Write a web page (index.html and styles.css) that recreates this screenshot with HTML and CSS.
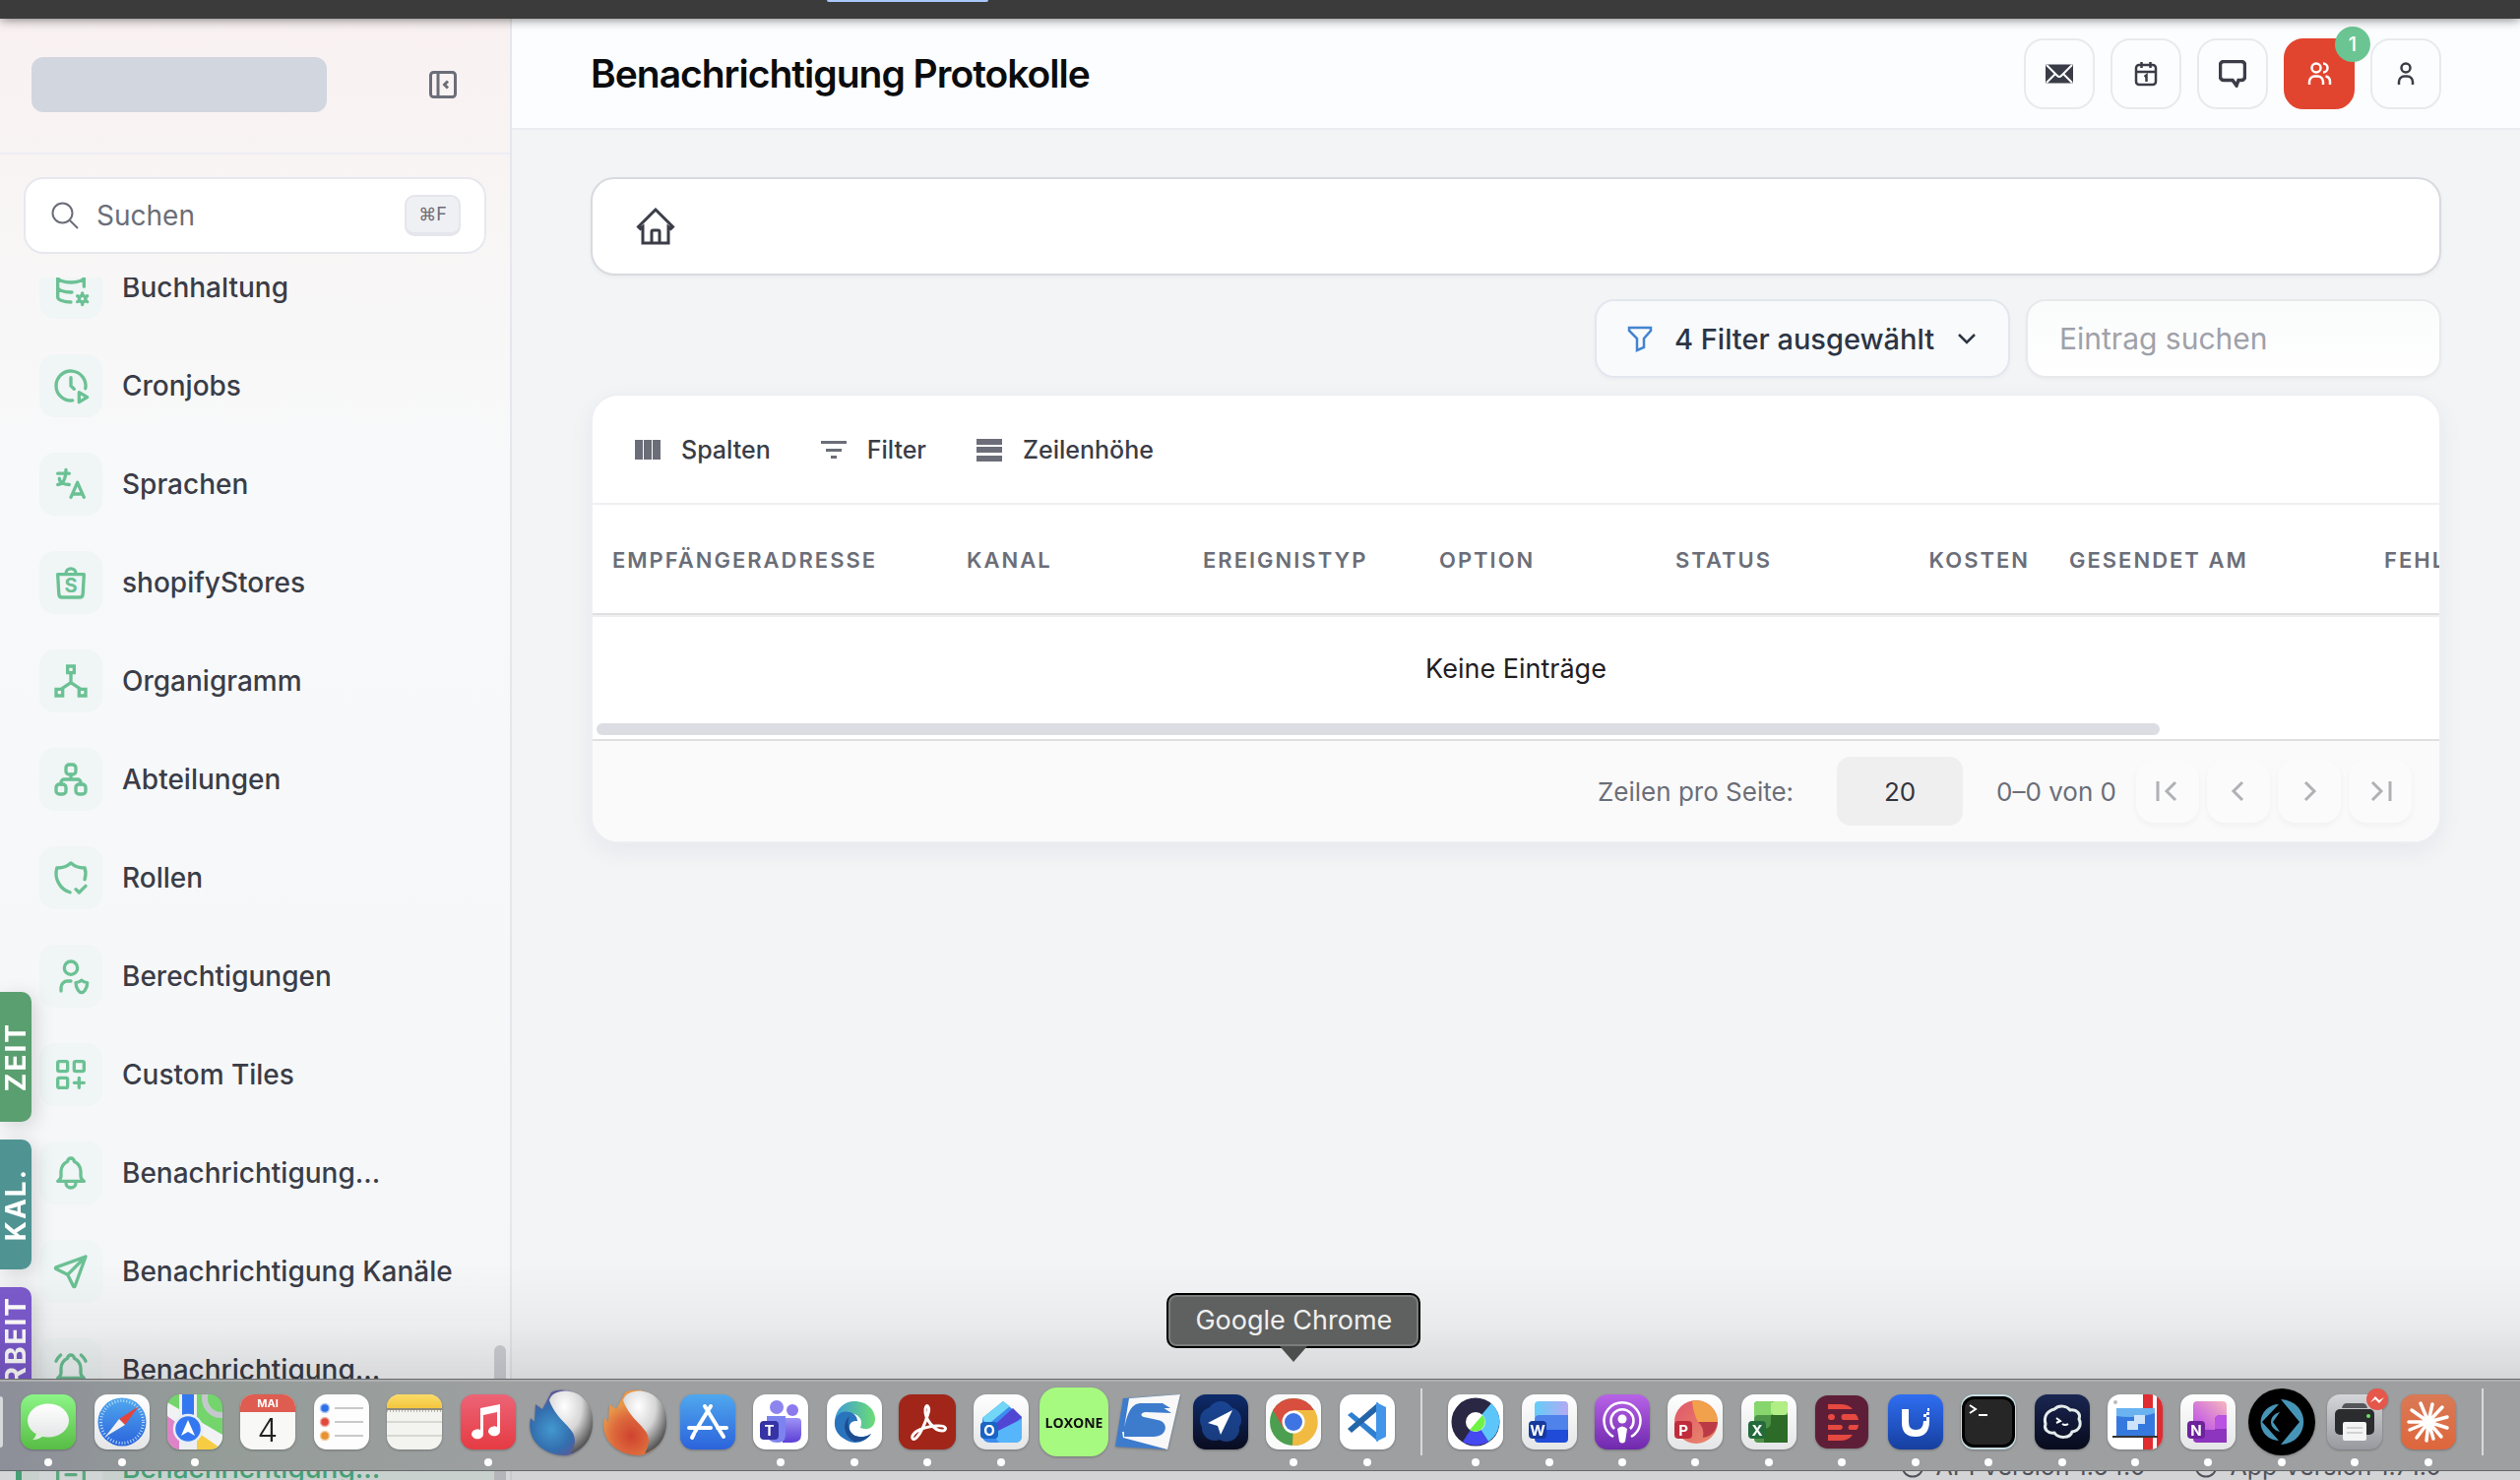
FILE: index.html
```html
<!DOCTYPE html>
<html lang="de">
<head>
    <meta charset="UTF-8">
    <meta name="viewport" content="width=device-width, initial-scale=1.0">
    <title>Benachrichtigung Protokolle</title>
    <link rel="stylesheet" href="styles.css">
</head>
<body>
    <div class="browser-bar"><span class="browser-tab"></span></div>

    <div class="app">
        <aside class="sidebar">
            <div class="sidebar-header">
                <div class="logo"></div>
                <button type="button" class="toggle-btn" aria-label="Menü einklappen">
                    <svg class="icon-md" viewBox="0 0 28 28"><rect x="1.5" y="1.5" width="25" height="25" rx="3"/><path d="M9 2v24"/><path d="M19 10.500l-3.500 3.500 3.500 3.500" /></svg>
                </button>
            </div>

            <label class="sidebar-search">
                <svg class="icon-md" viewBox="0 0 28 28"><circle cx="11.500" cy="11.500" r="10"/><path d="M19 19l8 8"/></svg>
                <input type="text" placeholder="Suchen" aria-label="Suchen">
                <kbd>⌘F</kbd>
            </label>

            <nav class="nav">
                <ul class="nav-list">
                    <li><a href="#" class="nav-item"><span class="tile"><svg viewBox="0 0 24 24"><path d="M4 6c0 1.657 3.582 3 8 3s8-1.343 8-3-3.582-3-8-3-8 1.343-8 3M4 6v6c0 1.657 3.582 3 8 3h.6M20 11.500V6M4 12v6c0 1.657 3.582 3 8 3"/><circle cx="19" cy="19" r="2"/><path d="M19 15.500V17M19 21v1.500M22 17.250l-1.300.75M17.300 20l-1.300.75M16 17.250l1.300.75M20.700 20l1.300.75"/></svg></span>Buchhaltung</a></li>
                    <li><a href="#" class="nav-item"><span class="tile"><svg viewBox="0 0 24 24"><path d="M12 7v5l2 2M17 22l5-3-5-3zM13 20.940a9 9 0 1 1 7.850-7.290"/></svg></span>Cronjobs</a></li>
                    <li><a href="#" class="nav-item"><span class="tile"><svg viewBox="0 0 24 24"><path d="M4 5.500h7M9 3.200c0 6-2.200 9.100-5 9.100M5 8.500c0 2.100 2.300 3.700 6 3.800M12 20l4-9 4 9M19 18h-6"/></svg></span>Sprachen</a></li>
                    <li><a href="#" class="nav-item"><span class="tile"><svg viewBox="0 0 24 24"><path d="M4 7h16l-.700 12.200a2 2 0 0 1-2 1.800H6.700a2 2 0 0 1-2-1.800zM9 6.500a3 3 0 0 1 6 0"/><text class="bag-letter" x="12" y="18" text-anchor="middle">S</text></svg></span>shopifyStores</a></li>
                    <li><a href="#" class="nav-item"><span class="tile"><svg class="sharp" viewBox="0 0 24 24"><path d="M10 3h4v4h-4zM3 17h4v4H3zM17 17h4v4h-4zM12 7v6M12 13l-6 4M12 13l6 4"/></svg></span>Organigramm</a></li>
                    <li><a href="#" class="nav-item"><span class="tile"><svg viewBox="0 0 24 24"><rect x="9" y="3" width="6" height="6" rx="2"/><rect x="3" y="15" width="6" height="6" rx="2"/><rect x="15" y="15" width="6" height="6" rx="2"/><path d="M6 15v-1a2 2 0 0 1 2-2h8a2 2 0 0 1 2 2v1M12 9v3"/></svg></span>Abteilungen</a></li>
                    <li><a href="#" class="nav-item"><span class="tile"><svg viewBox="0 0 24 24"><path d="M11.460 20.850A12 12 0 0 1 3.500 6 12 12 0 0 0 12 3a12 12 0 0 0 8.500 3 12 12 0 0 1-.100 7.060M15 19l2 2 4-4"/></svg></span>Rollen</a></li>
                    <li><a href="#" class="nav-item"><span class="tile"><svg viewBox="0 0 24 24"><circle cx="12" cy="7" r="4"/><path d="M6 21v-2a4 4 0 0 1 4-4h2M22 16c0 4-2.500 6-3.500 6S15 20 15 16c1 0 2.500-.500 3.500-1.500 1 1 2.500 1.500 3.500 1.500z"/></svg></span>Berechtigungen</a></li>
                    <li><a href="#" class="nav-item"><span class="tile"><svg viewBox="0 0 24 24"><rect x="4" y="4" width="6" height="6" rx="1"/><rect x="14" y="4" width="6" height="6" rx="1"/><rect x="4" y="14" width="6" height="6" rx="1"/><path d="M14 17h6M17 14v6"/></svg></span>Custom Tiles</a></li>
                    <li><a href="#" class="nav-item"><span class="tile"><svg viewBox="0 0 24 24"><path d="M10 5a2 2 0 1 1 4 0 7 7 0 0 1 4 6v3a4 4 0 0 0 2 3H4a4 4 0 0 0 2-3v-3a7 7 0 0 1 4-6M9 17v1a3 3 0 0 0 6 0v-1"/></svg></span>Benachrichtigung...</a></li>
                    <li><a href="#" class="nav-item"><span class="tile"><svg viewBox="0 0 24 24"><path d="M10 14L21 3M21 3l-6.500 18a.550.550 0 0 1-1 0L10 14l-7-3.500a.550.550 0 0 1 0-1z"/></svg></span>Benachrichtigung Kanäle</a></li>
                    <li><a href="#" class="nav-item"><span class="tile"><svg viewBox="0 0 24 24"><path d="M10 5a2 2 0 1 1 4 0 7 7 0 0 1 4 6v3a4 4 0 0 0 2 3H4a4 4 0 0 0 2-3v-3a7 7 0 0 1 4-6M9 17v1a3 3 0 0 0 6 0v-1M21 6.700A11 11 0 0 0 18.200 3M3 6.700A11 11 0 0 1 5.800 3"/></svg></span>Benachrichtigung...</a></li>
                    <li><a href="#" class="nav-item active"><span class="tile"><svg viewBox="0 0 24 24"><rect x="4" y="3" width="16" height="18" rx="2"/><path d="M9 8h6M9 12h6M9 16h6"/></svg></span>Benachrichtigung...</a></li>
                </ul>
                <span class="nav-thumb"></span>
            </nav>
        </aside>

        <main class="main">
            <header class="topbar">
                <h1>Benachrichtigung Protokolle</h1>
                <div class="topbar-actions">
                    <button type="button" class="icon-btn" aria-label="Nachrichten">
                        <svg class="icon-md" viewBox="0 0 28 28"><rect x="0" y="4.500" width="28" height="19" rx="1" fill="currentColor" stroke="none"/><path class="mail-line" d="M1 5l11 11q2 2 4 0L27 5M1 23l9-9M27 23l-9-9"/></svg>
                    </button>
                    <button type="button" class="icon-btn" aria-label="Kalender">
                        <svg class="icon-md" viewBox="0 0 28 28"><rect x="4" y="5" width="20" height="20" rx="3"/><path d="M4 12h20M9.500 2v6M18.500 2v6M12.500 17l2-1.500V22"/></svg>
                    </button>
                    <button type="button" class="icon-btn" aria-label="Chat">
                        <svg class="icon-md" viewBox="0 0 28 28"><path class="bold-line" d="M5 1.500h18A3.500 3.500 0 0 1 26.500 5v12a3.500 3.500 0 0 1-3.500 3.500h-3L18 26l-4-5.500H5A3.500 3.500 0 0 1 1.500 17V5A3.500 3.500 0 0 1 5 1.500z"/></svg>
                    </button>
                    <button type="button" class="icon-btn alert" aria-label="Team">
                        <svg class="icon-md" viewBox="0 0 28 28"><circle cx="11" cy="8" r="4.500"/><path d="M4 25v-3a5.500 5.500 0 0 1 5.500-5.500h3A5.500 5.500 0 0 1 18 22v3M18 3.500a4.500 4.500 0 0 1 0 9M20.500 16.500A5.500 5.500 0 0 1 25 22v3"/></svg>
                        <span class="badge">1</span>
                    </button>
                    <button type="button" class="icon-btn" aria-label="Profil">
                        <svg class="icon-md" viewBox="0 0 28 28"><circle cx="14" cy="8" r="4.500"/><path d="M7 25v-3a5.500 5.500 0 0 1 5.500-5.500h3A5.500 5.500 0 0 1 21 22v3"/></svg>
                    </button>
                </div>
            </header>

            <div class="content">
                <div class="breadcrumb">
                    <a href="#" aria-label="Startseite">
                        <svg class="icon-lg" viewBox="0 0 40 40"><path d="M20 3L2.500 20.500l2 2L7 20.500V37h26V20.500l2.500 2 2-2zM16 37V25.500q0-1.500 1.500-1.500h5q1.500 0 1.500 1.500V37"/></svg>
                    </a>
                </div>

                <div class="filters">
                    <button type="button" class="filter-btn">
                        <svg class="icon-md funnel" viewBox="0 0 28 28"><path d="M3 3h22v3l-7 8v9l-7 3V14L3 6z"/></svg>
                        4 Filter ausgewählt
                        <svg class="icon-sm" viewBox="0 0 24 24"><path d="M4 8l8 8 8-8"/></svg>
                    </button>
                    <input type="text" class="entry-search" placeholder="Eintrag suchen" aria-label="Eintrag suchen">
                </div>

                <section class="grid-card">
                    <div class="grid-toolbar">
                        <button type="button"><svg class="icon-md solid" viewBox="0 0 28 28"><path d="M1 4h8v20H1zM10 4h8v20h-8zM19 4h8v20h-8z"/></svg>Spalten</button>
                        <button type="button"><svg class="icon-md solid" viewBox="0 0 28 28"><path d="M1 5h26v3H1zM6 13h16v3H6zM11 20h6v3h-6z"/></svg>Filter</button>
                        <button type="button"><svg class="icon-md solid" viewBox="0 0 28 28"><path d="M1 3h26v6H1zM1 11h26v6H1zM1 20h26v6H1z"/></svg>Zeilenhöhe</button>
                    </div>

                    <div class="table-scroll">
                        <table>
                            <thead>
                                <tr>
                                    <th class="col-xl">Empfängeradresse</th>
                                    <th class="col-md">Kanal</th>
                                    <th class="col-md">Ereignistyp</th>
                                    <th class="col-md">Option</th>
                                    <th class="col-md">Status</th>
                                    <th class="col-sm number">Kosten</th>
                                    <th class="col-lg">Gesendet am</th>
                                    <th>Fehler</th>
                                </tr>
                            </thead>
                        </table>
                        <p class="empty">Keine Einträge</p>
                    </div>
                    <div class="scroll-track"><div class="scroll-thumb"></div></div>

                    <div class="grid-footer">
                        <label for="pageSize">Zeilen pro Seite:</label>
                        <select id="pageSize">
                            <option>20</option>
                            <option>50</option>
                            <option>100</option>
                        </select>
                        <span class="range">0–0 von 0</span>
                        <div class="pager">
                            <button type="button" disabled aria-label="Erste Seite"><svg class="icon-md" viewBox="0 0 28 28"><path d="M4 4v20M22 5l-9 9 9 9"/></svg></button>
                            <button type="button" disabled aria-label="Vorherige Seite"><svg class="icon-md" viewBox="0 0 28 28"><path d="M18 5l-9 9 9 9"/></svg></button>
                            <button type="button" disabled aria-label="Nächste Seite"><svg class="icon-md" viewBox="0 0 28 28"><path d="M10 5l9 9-9 9"/></svg></button>
                            <button type="button" disabled aria-label="Letzte Seite"><svg class="icon-md" viewBox="0 0 28 28"><path d="M6 5l9 9-9 9M24 4v20"/></svg></button>
                        </div>
                    </div>
                </section>
            </div>

            <footer class="versions">
                <span><svg class="icon-sm" viewBox="0 0 24 24"><circle cx="12" cy="12" r="10.500"/><path d="M12 11v6M12 7v1"/></svg>API Version 1.64.0</span>
                <span><svg class="icon-sm" viewBox="0 0 24 24"><circle cx="12" cy="12" r="10.500"/><path d="M12 11v6M12 7v1"/></svg>App Version 1.71.0</span>
            </footer>
        </main>
    </div>

    <div class="side-tabs">
        <button type="button" class="side-tab green">ZEIT</button>
        <button type="button" class="side-tab teal">KAL.</button>
        <button type="button" class="side-tab purple">ARBEIT</button>
    </div>

    <div class="dock-shade"></div>

    <!-- shared gradients -->
    <svg class="defs" aria-hidden="true">
        <defs>
            <linearGradient id="gGreen" x2="0" y2="1"><stop offset="0" stop-color="#8cf587"/><stop offset="1" stop-color="#57bd45"/></linearGradient>
            <linearGradient id="gWhite" x2="0" y2="1"><stop offset="0" stop-color="#fff"/><stop offset="1" stop-color="#e4e5e6"/></linearGradient>
            <linearGradient id="gBlue" x2="0" y2="1"><stop offset="0" stop-color="#50a8ee"/><stop offset="1" stop-color="#2b63dc"/></linearGradient>
            <linearGradient id="gRed" x2="0" y2="1"><stop offset="0" stop-color="#ec6476"/><stop offset="1" stop-color="#e63b43"/></linearGradient>
            <linearGradient id="gYellow" x2="0" y2="1"><stop offset="0" stop-color="#fbdc68"/><stop offset="1" stop-color="#f3c63d"/></linearGradient>
            <linearGradient id="gPurple" x2="0" y2="1"><stop offset="0" stop-color="#b863e8"/><stop offset="1" stop-color="#6f29ad"/></linearGradient>
            <linearGradient id="gNavy" x2="0" y2="1"><stop offset="0" stop-color="#1a2652"/><stop offset="1" stop-color="#080b1c"/></linearGradient>
            <linearGradient id="gNavy2" x2="0" y2="1"><stop offset="0" stop-color="#0d2b6c"/><stop offset="1" stop-color="#0a0c1f"/></linearGradient>
            <linearGradient id="gUnifi" x2="0" y2="1"><stop offset="0" stop-color="#2f6ef2"/><stop offset="1" stop-color="#163f9f"/></linearGradient>
            <linearGradient id="gOrange" x2="0" y2="1"><stop offset="0" stop-color="#d97a56"/><stop offset="1" stop-color="#de663c"/></linearGradient>
            <linearGradient id="gSteel" x2="0" y2="1"><stop offset="0" stop-color="#d5d6d9"/><stop offset="1" stop-color="#98989f"/></linearGradient>
            <linearGradient id="gTeams" x2="0" y2="1"><stop offset="0" stop-color="#9d93f5"/><stop offset="1" stop-color="#5d3fd6"/></linearGradient>
            <linearGradient id="gEdge"><stop offset="0" stop-color="#3f9bd8"/><stop offset="1" stop-color="#6bdc74"/></linearGradient>
            <linearGradient id="gWord"><stop offset="0" stop-color="#64cdf8"/><stop offset="1" stop-color="#b4a9f3"/></linearGradient>
            <linearGradient id="gPpt" x2="1" y2="1"><stop offset="0" stop-color="#e0566a"/><stop offset="1" stop-color="#e98c6b"/></linearGradient>
            <linearGradient id="gNote" x1="0" y1="1" x2="1" y2="0"><stop offset="0" stop-color="#b946ee"/><stop offset="1" stop-color="#f7b8bd"/></linearGradient>
            <radialGradient id="gPearl" cx=".35" cy=".25" r=".8"><stop offset="0" stop-color="#fff"/><stop offset=".5" stop-color="#d6d6d6"/><stop offset="1" stop-color="#444"/></radialGradient>
            <radialGradient id="gFoxBlue" cx=".35" cy=".6"><stop offset="0" stop-color="#4398d0"/><stop offset=".65" stop-color="#336eae"/><stop offset="1" stop-color="#5a5a9a"/></radialGradient>
            <radialGradient id="gFoxRed" cx=".45" cy=".7"><stop offset="0" stop-color="#d0432f"/><stop offset=".6" stop-color="#dd6a3c"/><stop offset="1" stop-color="#e8964a"/></radialGradient>
        </defs>
    </svg>

    <div class="dock">
        <button type="button" class="dock-app open" aria-label="Nachrichten"><svg viewBox="0 0 56 56"><rect width="56" height="56" rx="13" fill="url(#gGreen)"/><ellipse cx="28" cy="26.500" rx="21" ry="17" fill="url(#gWhite)"/><path d="M16 38q0 5-4 8 8 0 12-5z" fill="#dfeedd"/></svg></button>
        <button type="button" class="dock-app open" aria-label="Safari"><svg viewBox="0 0 56 56"><rect width="56" height="56" rx="13" fill="url(#gWhite)"/><circle cx="28" cy="28" r="24.500" fill="url(#gBlue)"/><circle cx="28" cy="28" r="21.500" fill="none" stroke="#b9dcf8" stroke-width="3" stroke-dasharray="1 2"/><path d="M45 12L25 25l6 6z" fill="#e2453c"/><path d="M11 43l14-18 6 6z" fill="#f2f2f2"/></svg></button>
        <button type="button" class="dock-app open" aria-label="Karten"><svg viewBox="0 0 56 56"><clipPath id="cMap"><rect width="56" height="56" rx="13"/></clipPath><g clip-path="url(#cMap)"><path d="M0 0h56v56H0z" fill="#73d56b"/><path d="M0 21l14 8v27H0z" fill="#df83c8"/><path d="M0 8l56 33v15h-9L0 22z" fill="#f1f2f4"/><path d="M30 38l26 18H30z" fill="#f6cc44"/><path d="M12 0h18v56H12z" fill="#eceef2"/><path d="M15 0h12v28H15z" fill="#3478f1"/><circle cx="55" cy="4" r="17" fill="none" stroke="#c4c8cc" stroke-width="6"/></g><circle cx="21" cy="35" r="14" fill="#3478f1" stroke="#e8ecf5" stroke-width="2.500"/><path d="M21 26l7 16-7-4-7 4z" fill="#fff"/></svg></button>
        <button type="button" class="dock-app" aria-label="Kalender"><svg viewBox="0 0 56 56"><rect width="56" height="56" rx="13" fill="#f8f8f6"/><path d="M0 18v-5A13 13 0 0 1 13 0h30a13 13 0 0 1 13 13v5z" fill="#df5c50"/><text class="cal-month" x="28" y="13" text-anchor="middle">MAI</text><text class="cal-day" x="28" y="48" text-anchor="middle">4</text></svg></button>
        <button type="button" class="dock-app" aria-label="Erinnerungen"><svg viewBox="0 0 56 56"><rect width="56" height="56" rx="13" fill="#fdfdfd"/><path d="M21 14h29M21 28h29M21 42h29" stroke="#c9c9cc" stroke-width="2"/><g stroke-width="1.500"><circle cx="11" cy="14" r="4.500" fill="#2f6fe8" stroke="#b0c8f5"/><circle cx="11" cy="28" r="4.500" fill="#e0483c" stroke="#f0b0aa"/><circle cx="11" cy="42" r="4.500" fill="#e79132" stroke="#f2cfa0"/></g></svg></button>
        <button type="button" class="dock-app" aria-label="Notizen"><svg viewBox="0 0 56 56"><rect width="56" height="56" rx="13" fill="#f3f3ef"/><path d="M0 14v-1A13 13 0 0 1 13 0h30a13 13 0 0 1 13 13v1z" fill="url(#gYellow)"/><path d="M0 15h56" stroke="#8d8a7c"/><path d="M0 17h56" stroke="#b5b3aa" stroke-dasharray="1 2"/><path d="M0 28h56M0 42h56" stroke="#d8d8d3"/></svg></button>
        <button type="button" class="dock-app open" aria-label="Musik"><svg viewBox="0 0 56 56"><rect width="56" height="56" rx="13" fill="url(#gRed)"/><path d="M20 14l20-4v28a6 5 0 1 1-3-5V18l-14 3v20a6 5 0 1 1-3-5z" fill="#fff"/></svg></button>
        <button type="button" class="dock-app" aria-label="Browser Blau"><svg class="large" viewBox="0 0 68 68"><path d="M24 4C40-4 66 8 65 36 64 54 52 67 38 68 16 68-2 52 3 30L7 34 8 16l7 5z" fill="url(#gFoxBlue)"/><path d="M22 12C26-4 66-2 66 34 66 52 56 62 44 66 58 40 32 40 22 12z" fill="url(#gPearl)"/></svg></button>
        <button type="button" class="dock-app" aria-label="Browser Rot"><svg class="large" viewBox="0 0 68 68"><path d="M24 4C40-4 66 8 65 36 64 54 52 67 38 68 16 68-2 52 3 30L7 34 8 16l7 5z" fill="url(#gFoxRed)"/><path d="M22 12C26-4 66-2 66 34 66 52 56 62 44 66 58 40 32 40 22 12z" fill="url(#gPearl)"/></svg></button>
        <button type="button" class="dock-app" aria-label="App Store"><svg viewBox="0 0 56 56"><rect width="56" height="56" rx="13" fill="url(#gBlue)"/><path d="M31 12L15 38M25 12l19 31M9 34h22M38 34h9M14 40l-2 4" stroke="#fff" stroke-width="4" stroke-linecap="round"/></svg></button>
        <button type="button" class="dock-app open" aria-label="Teams"><svg viewBox="0 0 56 56"><rect width="56" height="56" rx="13" fill="#fff"/><circle cx="24" cy="13" r="7" fill="#8d85ee"/><circle cx="40" cy="16" r="6" fill="#8d79ee"/><path d="M30 24h15q4 0 4 4v13q0 8-10 8h-9z" fill="url(#gTeams)"/><path d="M14 22h19v19q0 8-8 8-11 0-11-10z" fill="#7c83ee"/><rect x="7" y="27" width="19" height="19" rx="4" fill="#3633a5"/><text class="app-letter" x="16.500" y="42" text-anchor="middle">T</text></svg></button>
        <button type="button" class="dock-app open" aria-label="Edge"><svg viewBox="0 0 56 56"><rect width="56" height="56" rx="13" fill="#fff"/><path d="M8 27C9 14 18 7 28 7c13 0 21 9 21 18 0 9-8 12-15 9 4-9-3-15-12-15-6 0-11 3-14 8z" fill="url(#gEdge)"/><path d="M8 27c2-8 9-11 15-9 5 1 8 5 8 9-7-1-10 5-7 11 4 6 13 7 21 2-7 10-18 11-26 6C11 42 7 35 8 27z" fill="#2a73bd"/><path d="M23 22c-8 7-6 20 5 26 8 0 14-3 17-8-8 5-17 4-21-2-3-6-3-11-1-16z" fill="#1d4d8f"/></svg></button>
        <button type="button" class="dock-app open" aria-label="Acrobat"><svg viewBox="0 0 56 56"><rect x="-1" width="58" height="56" rx="13" fill="#a12518"/><path d="M13 42c3-6 14-9 24-10 12-1 11 5 6 5-8 0-18-12-17-22 1-7 5-2 3 4-3 10-7 20-12 25-3 3-5 1-4-2z" fill="none" stroke="#fff" stroke-width="3"/></svg></button>
        <button type="button" class="dock-app open" aria-label="Outlook"><svg viewBox="0 0 56 56"><rect width="56" height="56" rx="13" fill="url(#gWhite)"/><path d="M9 24L30 7l19 16v19q0 7-7 7H17q-8 0-8-8z" fill="#3c8cf0"/><path d="M9 24L30 7l7 5-24 20z" fill="#72d6f6"/><path d="M18 34l22-20 9 9-22 20z" fill="#5146d4"/><path d="M19 40l30-15v17q0 7-7 7H26z" fill="#57b5fa"/><rect x="7" y="28" width="18" height="17" rx="4" fill="#1b63c4"/><text class="app-letter" x="16" y="42" text-anchor="middle">O</text></svg></button>
        <button type="button" class="dock-app" aria-label="Loxone"><svg class="large" viewBox="0 0 68 68"><rect x="-1" y="-1" width="70" height="70" rx="18" fill="#a6fa80"/><text class="loxone" x="34" y="40" text-anchor="middle">LOXONE</text></svg></button>
        <button type="button" class="dock-app" aria-label="Swyx"><svg class="large" viewBox="0 0 68 68"><path d="M9 10L67 6 54 62 1 59z" fill="#3d7bcd"/><path d="M15 10L67 6 54 62 9 50 8 44l32 2c6-1 7-7 2-9l-17-3c-10-2-10-12 2-14h30l-8-5H26C14 16 12 34 10 40z" fill="#f8f8f8"/><path d="M58 25l-9-6H28c-14 0-14 15-4 16l14 2c5 1 4 7-1 7H10v5h30c14 0 16-15 4-17l-14-3c-4-1-3-5 2-5z" fill="#3d7bcd"/></svg></button>
        <button type="button" class="dock-app" aria-label="Navigator"><svg viewBox="0 0 56 56"><rect width="56" height="56" rx="13" fill="url(#gNavy2)"/><g fill="#2359b5" opacity=".6"><ellipse cx="28" cy="20" rx="13" ry="13"/><ellipse cx="20" cy="26" rx="13" ry="13"/><ellipse cx="36" cy="26" rx="13" ry="13"/><ellipse cx="22" cy="34" rx="13" ry="13"/><ellipse cx="34" cy="35" rx="13" ry="13"/></g><path d="M40 16L15 29l10 3 3 9z" fill="#fff"/></svg></button>
        <button type="button" class="dock-app open" aria-label="Google Chrome"><svg viewBox="0 0 56 56"><rect width="56" height="56" rx="13" fill="#fafafa"/><circle cx="28" cy="28" r="24" fill="#4c9f50"/><path d="M28 28L28 16h21.500A24 24 0 0 1 27 52z" fill="#f1bb42"/><path d="M7.200 16a24 24 0 0 1 41.600 0H28L17.500 34z" fill="#d84f3f"/><circle cx="28" cy="28" r="11.500" fill="#fff"/><circle cx="28" cy="28" r="9" fill="#3f75e3"/></svg><span class="dock-tip">Google Chrome</span></button>
        <button type="button" class="dock-app open" aria-label="Visual Studio Code"><svg viewBox="0 0 56 56"><rect width="56" height="56" rx="13" fill="#fff"/><path d="M8 21l4-3 27 22v8z" fill="#2f7fd0"/><path d="M8 35l4 4 27-23V8z" fill="#2464a8"/><path d="M37 8l10 5v30l-10 5z" fill="#4295e8"/></svg></button>
        <span class="dock-divider"></span>
        <button type="button" class="dock-app open" aria-label="Analyse"><svg viewBox="0 0 56 56"><rect width="56" height="56" rx="13" fill="#fff"/><circle cx="28" cy="28" r="24.500" fill="#292744"/><path d="M28 28l16-19a24.500 24.500 0 0 1-3 39z" fill="#5cc6fb"/><path d="M28 28l13 20a24.500 24.500 0 0 1-26 0z" fill="#4549f0"/><circle cx="28" cy="28" r="10" fill="#fff"/><path d="M35 21a10 10 0 0 1-13 15z" fill="#70f245"/></svg></button>
        <button type="button" class="dock-app open" aria-label="Word"><svg viewBox="0 0 56 56"><rect width="56" height="56" rx="13" fill="url(#gWhite)"/><rect x="13" y="7" width="34" height="20" rx="4" fill="url(#gWord)"/><path d="M13 26q0-5 5-5h29v15H13z" fill="#4f82ea"/><path d="M13 36h34v9q0 4-4 4H17q-4 0-4-4z" fill="#1f4bd8"/><rect x="7" y="27" width="18" height="18" rx="4" fill="#17399b"/><text class="app-letter" x="16" y="42" text-anchor="middle">W</text></svg></button>
        <button type="button" class="dock-app open" aria-label="Podcasts"><svg viewBox="0 0 56 56"><rect width="56" height="56" rx="13" fill="url(#gPurple)"/><g fill="none" stroke="#fff" stroke-width="2.500"><path d="M19 43a18.500 18.500 0 1 1 18 0"/><path d="M20 35a11.500 11.500 0 1 1 16 0"/></g><circle cx="28" cy="25" r="4.500" fill="#fff"/><path d="M23 35q5-5 10 0l-2 13q-3 3-6 0z" fill="#fff"/></svg></button>
        <button type="button" class="dock-app open" aria-label="PowerPoint"><svg viewBox="0 0 56 56"><rect width="56" height="56" rx="13" fill="url(#gWhite)"/><circle cx="29" cy="28" r="22" fill="url(#gPpt)"/><path d="M25 6.500A22 22 0 0 1 51 28q-8 3-20 0-5-9-6-21.500z" fill="#f1a04b"/><path d="M31 28h20q-2 14-15 16 2-10-5-16z" fill="#bc3a45"/><rect x="7" y="27" width="18" height="18" rx="4" fill="#bf2c3c"/><text class="app-letter" x="16" y="42" text-anchor="middle">P</text></svg></button>
        <button type="button" class="dock-app open" aria-label="Excel"><svg viewBox="0 0 56 56"><rect width="56" height="56" rx="13" fill="url(#gWhite)"/><rect x="13" y="7" width="34" height="42" rx="4" fill="#4d9448"/><path d="M13 11q0-4 4-4h14v14H17q-4 0-4 5z" fill="#86d66d"/><path d="M30 21h17v28H23V35q7 0 7-7z" fill="#2c6b28"/><rect x="30" y="7" width="17" height="14" rx="4" fill="#b1ee86"/><rect x="7" y="27" width="18" height="18" rx="4" fill="#246a3c"/><text class="app-letter" x="16" y="42" text-anchor="middle">X</text></svg></button>
        <button type="button" class="dock-app open" aria-label="Paste"><svg viewBox="0 0 56 56"><rect x="1" y="1" width="54" height="54" rx="13" fill="#5f1e37"/><g fill="#e5493f"><path d="M14 10h12q9 0 13 5H14z"/><rect x="14" y="20" width="7" height="6" rx="3"/><path d="M29 20h13q3 3 3 6H29q-3-3 0-6z"/><path d="M14 31h13q4 2 0 5H14zM36 31h9q0 3-2 5h-7q-3-2 0-5z"/><path d="M14 41h25q-4 6-13 6H14z"/></g></svg></button>
        <button type="button" class="dock-app open" aria-label="UniFi"><svg viewBox="0 0 56 56"><rect width="56" height="56" rx="13" fill="url(#gUnifi)"/><path d="M14 15h7v13q0 8 7 8 8 0 8-9h6q0 16-14 16T14 29z" fill="#fff"/><path d="M36 20h3v3h-3zM39 23h3v4h-3zM40 14h2v3h-2zM39 18h3v3h-3z" fill="#fff"/></svg></button>
        <button type="button" class="dock-app open" aria-label="Terminal"><svg viewBox="0 0 56 56"><rect width="56" height="56" rx="13" fill="#c7dde2"/><rect x="1" y="2" width="54" height="52" rx="12" fill="#000"/><rect x="4" y="5" width="48" height="46" rx="9" fill="#262626"/><path d="M9 11l6 4-6 4M18 21h9" fill="none" stroke="#fff" stroke-width="2"/></svg></button>
        <button type="button" class="dock-app open" aria-label="Termius"><svg viewBox="0 0 56 56"><rect width="56" height="56" rx="13" fill="url(#gNavy)"/><path d="M20 15c5-5 13-3 16 1 7-1 11 4 9 9 3 6 0 12-7 13-2 7-14 7-18 1-7 1-11-4-9-9-2-7 1-13 9-15z" fill="none" stroke="#e4eceb" stroke-width="3"/><path d="M22 24l4 3-4 2M28 30q3 2 6 0" fill="none" stroke="#fff" stroke-width="2"/></svg></button>
        <button type="button" class="dock-app open" aria-label="Remote"><svg viewBox="0 0 56 56"><clipPath id="cRem"><rect width="56" height="56" rx="13"/></clipPath><g clip-path="url(#cRem)"><path d="M0 0h56v56H0z" fill="#fff"/><path d="M36 0h10v56H36zM50 0h6v56h-6z" fill="#e02b30"/></g><circle cx="8" cy="8" r="2" fill="#bbb"/><rect x="9" y="14" width="39" height="28" fill="#3579df"/><path d="M9 14h39v5q-18 6-39 3z" fill="#6ab3f0"/><path d="M27 21h11v9H27zM20 27h11v9H20z" fill="#cde3fa"/><path d="M5 43h46" stroke="#333" stroke-width="2"/></svg></button>
        <button type="button" class="dock-app open" aria-label="OneNote"><svg viewBox="0 0 56 56"><rect width="56" height="56" rx="13" fill="url(#gWhite)"/><rect x="13" y="7" width="34" height="30" rx="4" fill="url(#gNote)"/><path d="M13 36h22V26q0-5 6-5h6v28H17q-4 0-4-4z" fill="#8d35be"/><path d="M35 35V26q0-5 6-5h6v14z" fill="#ba52e2"/><rect x="7" y="27" width="18" height="18" rx="4" fill="#6b2499"/><text class="app-letter" x="16" y="42" text-anchor="middle">N</text></svg></button>
        <button type="button" class="dock-app open" aria-label="Kompass"><svg class="large" viewBox="0 0 68 68"><circle cx="34" cy="34" r="34" fill="#000"/><g fill="#4695b7"><path d="M31 16A18.500 18.500 0 0 0 31 53L14 34z"/><path d="M33 11C64 13 64 55 33 57L52 34z"/><path d="M32 24C20 27 20 41 32 44L25 34z"/></g></svg></button>
        <button type="button" class="dock-app open" aria-label="Drucker"><svg viewBox="0 0 56 56"><rect width="56" height="56" rx="13" fill="url(#gSteel)"/><path d="M15 14q1-5 5-5h16q4 0 5 5z" fill="#55565a"/><rect x="8" y="15" width="40" height="26" rx="5" fill="#2b2c2e"/><circle cx="42" cy="22" r="2" fill="#6ae463"/><rect x="16" y="28" width="24" height="19" rx="2" fill="#f4f4f4"/><path d="M20 34h16M20 39h16" stroke="#d2d2d2"/><circle cx="51" cy="5" r="11" fill="#e4574a"/><path d="M44 8l5-6 4 4 5-3-5 6-4-4z" fill="#fff"/></svg></button>
        <button type="button" class="dock-app open" aria-label="Claude"><svg viewBox="0 0 56 56"><rect width="56" height="56" rx="13" fill="url(#gOrange)"/><path d="M28 28L20 9M28 28l4-18M28 28L42 13M28 28l19-5M28 28l19 6M28 28l13 15M28 28l5 17M28 28l-2 19M28 28L16 44M28 28L9 36M28 28H8M28 28L11 16" stroke="#fff" stroke-width="3.500" stroke-linecap="round"/></svg></button>
        <span class="dock-divider"></span>
    </div>
</body>
</html>
```
FILE: styles.css
```css
* {
    box-sizing: border-box;
}

body {
    font-family: Inter, "Liberation Sans", sans-serif;
    font-size: 28px;
    color: #3a3d47;
    margin: 0;
    height: 100vh;
    display: flex;
    flex-direction: column;
    overflow: hidden;
    background-color: #f3f4f6;
}

button,
input,
select {
    font-family: inherit;
    color: inherit;
}

button {
    cursor: pointer;
}

svg {
    fill: none;
    stroke: currentColor;
    stroke-width: 2;
    flex-shrink: 0;
}

.icon-sm {
    width: 24px;
    height: 24px;
}

.icon-md {
    width: 28px;
    height: 28px;
}

.icon-lg {
    width: 40px;
    height: 40px;
    stroke-width: 3;
}

.browser-bar {
    height: 19px;
    flex-shrink: 0;
    background-color: #3b3b3b;
    box-shadow: 0 0 12px rgba(0, 0, 0, 0.6);
    z-index: 5;
}

.browser-tab {
    display: block;
    width: 164px;
    height: 2px;
    margin-left: 840px;
    background-color: #a8c7fa;
    border-radius: 0 0 8px 8px;
}

.app {
    flex: 1;
    min-height: 0;
    display: flex;
}

/* Sidebar */
.sidebar {
    width: 520px;
    flex-shrink: 0;
    display: flex;
    flex-direction: column;
    border-right: 2px solid #e6e7ec;
    background: linear-gradient(#f9f1f1, #f8f7f7 20%, #f8f9fa 30%, #f5f6f8);
}

.sidebar-header {
    height: 138px;
    flex-shrink: 0;
    display: flex;
    align-items: center;
    justify-content: space-between;
    padding: 0 46px 2px 32px;
    border-bottom: 2px solid #edeef4;
}

.logo {
    width: 300px;
    height: 56px;
    border-radius: 12px;
    background-color: #d2d6df;
}

.toggle-btn {
    display: flex;
    padding: 8px;
    border: none;
    background: none;
    color: #6b6e78;
}

.toggle-btn svg {
    stroke-width: 3;
}

.sidebar-search {
    height: 78px;
    flex-shrink: 0;
    display: flex;
    align-items: center;
    gap: 18px;
    margin: 23px 24px 24px;
    padding: 0 24px 0 26px;
    border: 2px solid #e7e8ee;
    border-radius: 20px;
    background-color: #ffffff;
    color: #6b6e78;
}

.sidebar-search input {
    flex: 1;
    min-width: 0;
    padding: 0;
    border: none;
    outline: none;
    background: none;
    font-size: 28px;
}

.sidebar-search input::placeholder {
    color: #6b6e78;
    opacity: 1;
}

kbd {
    font-family: Inter, "DejaVu Sans", sans-serif;
    font-size: 18px;
    line-height: 24px;
    padding: 6px 12px;
    border: 2px solid #e5e6ec;
    border-bottom-width: 4px;
    border-radius: 10px;
    background-color: #eff0f4;
}

.nav {
    flex: 1;
    min-height: 0;
    overflow: hidden;
    position: relative;
}

/* list is scrolled slightly below the search box */
.nav-list {
    list-style: none;
    margin: -32px 16px 0;
    padding: 0;
    display: flex;
    flex-direction: column;
    gap: 16px;
}

.nav-item {
    height: 84px;
    display: flex;
    align-items: center;
    gap: 20px;
    padding-left: 24px;
    border-radius: 16px;
    color: #3a3d47;
    font-weight: 500;
    text-decoration: none;
}

.nav-item.active {
    padding-left: 18px;
    border-left: 6px solid #52b788;
    border-radius: 0 16px 16px 0;
    background-color: #e6f0ed;
    color: #52b788;
}

.tile {
    width: 64px;
    height: 64px;
    display: flex;
    align-items: center;
    justify-content: center;
    border-radius: 16px;
    background-color: #f0f5f5;
    color: #6bc194;
}

.tile svg {
    width: 40px;
    height: 40px;
    stroke-linecap: round;
    stroke-linejoin: round;
}

.tile .sharp {
    stroke-linecap: butt;
    stroke-linejoin: miter;
}

.bag-letter {
    font-size: 12px;
    font-weight: 700;
    fill: currentColor;
    stroke: none;
}

.nav-thumb {
    position: absolute;
    right: 4px;
    bottom: 0;
    width: 12px;
    height: 137px;
    border-radius: 6px 6px 0 0;
    background-color: #cfd0d6;
}

/* Main */
.main {
    flex: 1;
    min-width: 0;
    display: flex;
    flex-direction: column;
}

.topbar {
    height: 113px;
    display: flex;
    align-items: center;
    justify-content: space-between;
    padding: 0 80px;
    border-bottom: 2px solid #ebecf1;
    background-color: #fcfdff;
}

h1 {
    margin: 0;
    color: #0b0c0e;
    font-size: 39px;
    font-weight: 600;
    letter-spacing: -1px;
}

.topbar-actions {
    display: flex;
    gap: 16px;
}

.icon-btn {
    position: relative;
    width: 72px;
    height: 72px;
    display: flex;
    align-items: center;
    justify-content: center;
    padding: 0;
    border: 2px solid #e9eaee;
    border-radius: 20px;
    background-color: #fcfdff;
}

.icon-btn svg {
    stroke-width: 2.5;
}

.icon-btn.alert {
    border-color: #e2452f;
    background-color: #e2452f;
    color: #ffffff;
}

.icon-btn .mail-line {
    stroke: #fcfdff;
    stroke-width: 2;
}

.icon-btn .bold-line {
    stroke-width: 3.5;
}

.badge {
    position: absolute;
    top: -14px;
    right: -18px;
    width: 36px;
    height: 36px;
    border-radius: 50%;
    background-color: #6bc592;
    color: #ffffff;
    font-size: 20px;
    font-weight: 500;
    line-height: 36px;
    text-align: center;
}

.content {
    display: flex;
    flex-direction: column;
    padding: 48px 80px 0;
}

.breadcrumb {
    height: 100px;
    display: flex;
    align-items: center;
    padding: 0 44px;
    border: 2px solid #d9dae0;
    border-radius: 24px;
    background-color: #ffffff;
    box-shadow: 0 2px 4px rgba(0, 0, 0, 0.04);
}

.breadcrumb a {
    display: flex;
    color: #3a3d47;
}

.filters {
    display: flex;
    justify-content: flex-end;
    gap: 16px;
    margin: 24px 0 16px;
}

.filter-btn,
.entry-search {
    width: 422px;
    height: 80px;
    border: 2px solid #e2e7ef;
    border-radius: 20px;
    box-shadow: 0 2px 4px rgba(0, 0, 0, 0.03);
}

.filter-btn {
    display: flex;
    align-items: center;
    justify-content: space-between;
    padding: 0 30px;
    background-color: #f8fafc;
    color: #2c3444;
    font-size: 29px;
    font-weight: 500;
    white-space: nowrap;
}

.filter-btn svg {
    stroke-width: 2.5;
}

.filter-btn .funnel {
    color: #4384d0;
}

.entry-search {
    padding: 0 32px;
    border-color: #e8e9ed;
    background: linear-gradient(#fafbfb, #ffffff);
    font-size: 30px;
}

.entry-search::placeholder {
    color: #9fa1a9;
    opacity: 1;
}

/* Data grid */
.grid-card {
    border: 2px solid #eeeff3;
    border-radius: 28px;
    background-color: #ffffff;
    box-shadow: 0 8px 24px rgba(30, 40, 60, 0.06);
    overflow: hidden;
}

.grid-toolbar {
    height: 111px;
    display: flex;
    align-items: center;
    gap: 50px;
    padding: 0 42px;
    border-bottom: 2px solid #eeeff3;
}

.grid-toolbar button {
    display: flex;
    align-items: center;
    gap: 20px;
    padding: 0;
    border: none;
    background: none;
    font-size: 25px;
    font-weight: 500;
}

.grid-toolbar .solid {
    fill: #6b6e78;
    stroke: none;
}

.table-scroll {
    overflow: hidden;
}

table {
    width: 2200px;
    table-layout: fixed;
    border-spacing: 0;
}

th {
    height: 114px;
    padding: 0 20px;
    border-bottom: 2px solid #eeeff3;
    box-shadow: inset 0 -2px #e0e0e0;
    color: #6b6e78;
    font-size: 22px;
    font-weight: 600;
    letter-spacing: 2px;
    text-align: left;
    text-transform: uppercase;
    white-space: nowrap;
}

th.number {
    text-align: right;
}

.col-sm {
    width: 160px;
}

.col-md {
    width: 240px;
}

.col-lg {
    width: 320px;
}

.col-xl {
    width: 360px;
}

.empty {
    margin: 0;
    line-height: 106px;
    color: #1f2023;
    font-size: 27px;
    text-align: center;
}

.scroll-track {
    height: 20px;
    padding: 2px 4px 0;
    border-bottom: 2px solid #e0e0e0;
}

.scroll-thumb {
    width: 85%;
    height: 12px;
    border-radius: 6px;
    background-color: #dcdde2;
}

.grid-footer {
    height: 102px;
    display: flex;
    align-items: center;
    justify-content: flex-end;
    padding-right: 28px;
    background-color: #fafafa;
    color: #6b6e78;
    font-size: 26px;
}

.grid-footer select {
    appearance: none;
    width: 128px;
    height: 70px;
    margin: 0 34px 0 44px;
    border: none;
    border-radius: 14px;
    background-color: #efefef;
    color: #33353d;
    font-size: 26px;
    text-align: center;
    text-align-last: center;
}

.pager {
    display: flex;
    gap: 8px;
    margin-left: 20px;
}

.pager button {
    width: 64px;
    height: 64px;
    display: flex;
    align-items: center;
    justify-content: center;
    padding: 0;
    border: none;
    border-radius: 18px;
    background-color: #fbfbfb;
    color: #b0b1b5;
    box-shadow: 0 3px 6px rgba(0, 0, 0, 0.04);
}

.pager svg {
    stroke-width: 3;
}

.versions {
    display: flex;
    justify-content: flex-end;
    gap: 50px;
    margin-top: auto;
    padding-right: 80px;
    color: #5d606a;
    font-size: 25px;
    line-height: 28px;
}

.versions span {
    display: flex;
    align-items: center;
    gap: 12px;
}

/* Side tabs */
.side-tabs {
    position: fixed;
    left: 0;
    bottom: 64px;
    display: flex;
    flex-direction: column;
    gap: 18px;
}

.side-tab {
    width: 32px;
    height: 132px;
    padding: 0;
    border: none;
    border-radius: 0 10px 10px 0;
    color: #ffffff;
    font-size: 28px;
    font-weight: 700;
    letter-spacing: 2px;
    line-height: 32px;
    writing-mode: sideways-lr;
    box-shadow: 4px 4px 20px rgba(0, 0, 0, 0.15);
}

.green {
    background-color: #5a9f6f;
}

.teal {
    background-color: #4f9492;
}

.purple {
    background-color: #7c5bcd;
}

/* Dock */
.dock-shade {
    position: fixed;
    left: 0;
    right: 0;
    bottom: 0;
    height: 220px;
    background: linear-gradient(rgba(0, 0, 0, 0), rgba(0, 0, 0, 0.04) 30%, rgba(0, 0, 0, 0.12) 55%, rgba(0, 0, 0, 0.13));
    pointer-events: none;
}

.defs {
    position: absolute;
    width: 0;
    height: 0;
}

.dock {
    position: fixed;
    left: 0;
    right: 0;
    bottom: 9px;
    height: 94px;
    display: flex;
    align-items: center;
    padding: 0 20px 6px 12px;
    border-top: 1px solid #66696a;
    border-bottom: 1px solid #66696a;
    box-shadow: inset 0 2px #adafb0;
    background: linear-gradient(90deg, #8d8f99, #949c98 8%, #9d9fa0 20%, #9d9fa0);
}

/* edge of the app that is cut off on the left */
.dock::before {
    content: "";
    position: absolute;
    left: 0;
    width: 3px;
    height: 52px;
    border-radius: 0 3px 3px 0;
    background-color: #d6d8da;
}

.dock-app {
    position: relative;
    flex: 1 1 0;
    min-width: 0;
    height: 80px;
    display: flex;
    align-items: center;
    justify-content: center;
    padding: 0;
    border: none;
    background: none;
}

.dock-app svg {
    width: 56px;
    height: 56px;
    stroke: none;
    overflow: visible;
    filter: drop-shadow(0 1px 1px rgba(0, 0, 0, 0.25));
}

.dock-app .large {
    width: 68px;
    height: 68px;
}

.dock-app.open::after {
    content: "";
    position: absolute;
    bottom: -5px;
    width: 8px;
    height: 8px;
    border-radius: 50%;
    background-color: #ffffff;
}

.dock-divider {
    flex: 0 0 36px;
    height: 68px;
    background: linear-gradient(#d8d9da, #d8d9da) center / 2px 100% no-repeat;
}

.dock-tip {
    position: absolute;
    bottom: 115px;
    padding: 0 27px;
    border: 2px solid #000000;
    border-radius: 10px;
    background-color: #5f6160;
    box-shadow: inset 0 0 0 2px #7b7d7c;
    color: #f0f0f0;
    font-size: 27px;
    line-height: 52px;
    white-space: nowrap;
}

.dock-tip::after {
    content: "";
    position: absolute;
    left: 50%;
    top: 100%;
    margin-left: -14px;
    border: 14px solid transparent;
    border-top: 16px solid #4c4e4d;
    border-bottom: none;
}

.cal-month {
    font-size: 11px;
    font-weight: 700;
    fill: #ffffff;
}

.cal-day {
    font-size: 33px;
    font-weight: 300;
    fill: #222222;
}

.app-letter {
    font-size: 15px;
    font-weight: 700;
    fill: #ffffff;
}

.loxone {
    font-family: "Open Sans", sans-serif;
    font-size: 14px;
    font-weight: 700;
    fill: #111111;
}
```
